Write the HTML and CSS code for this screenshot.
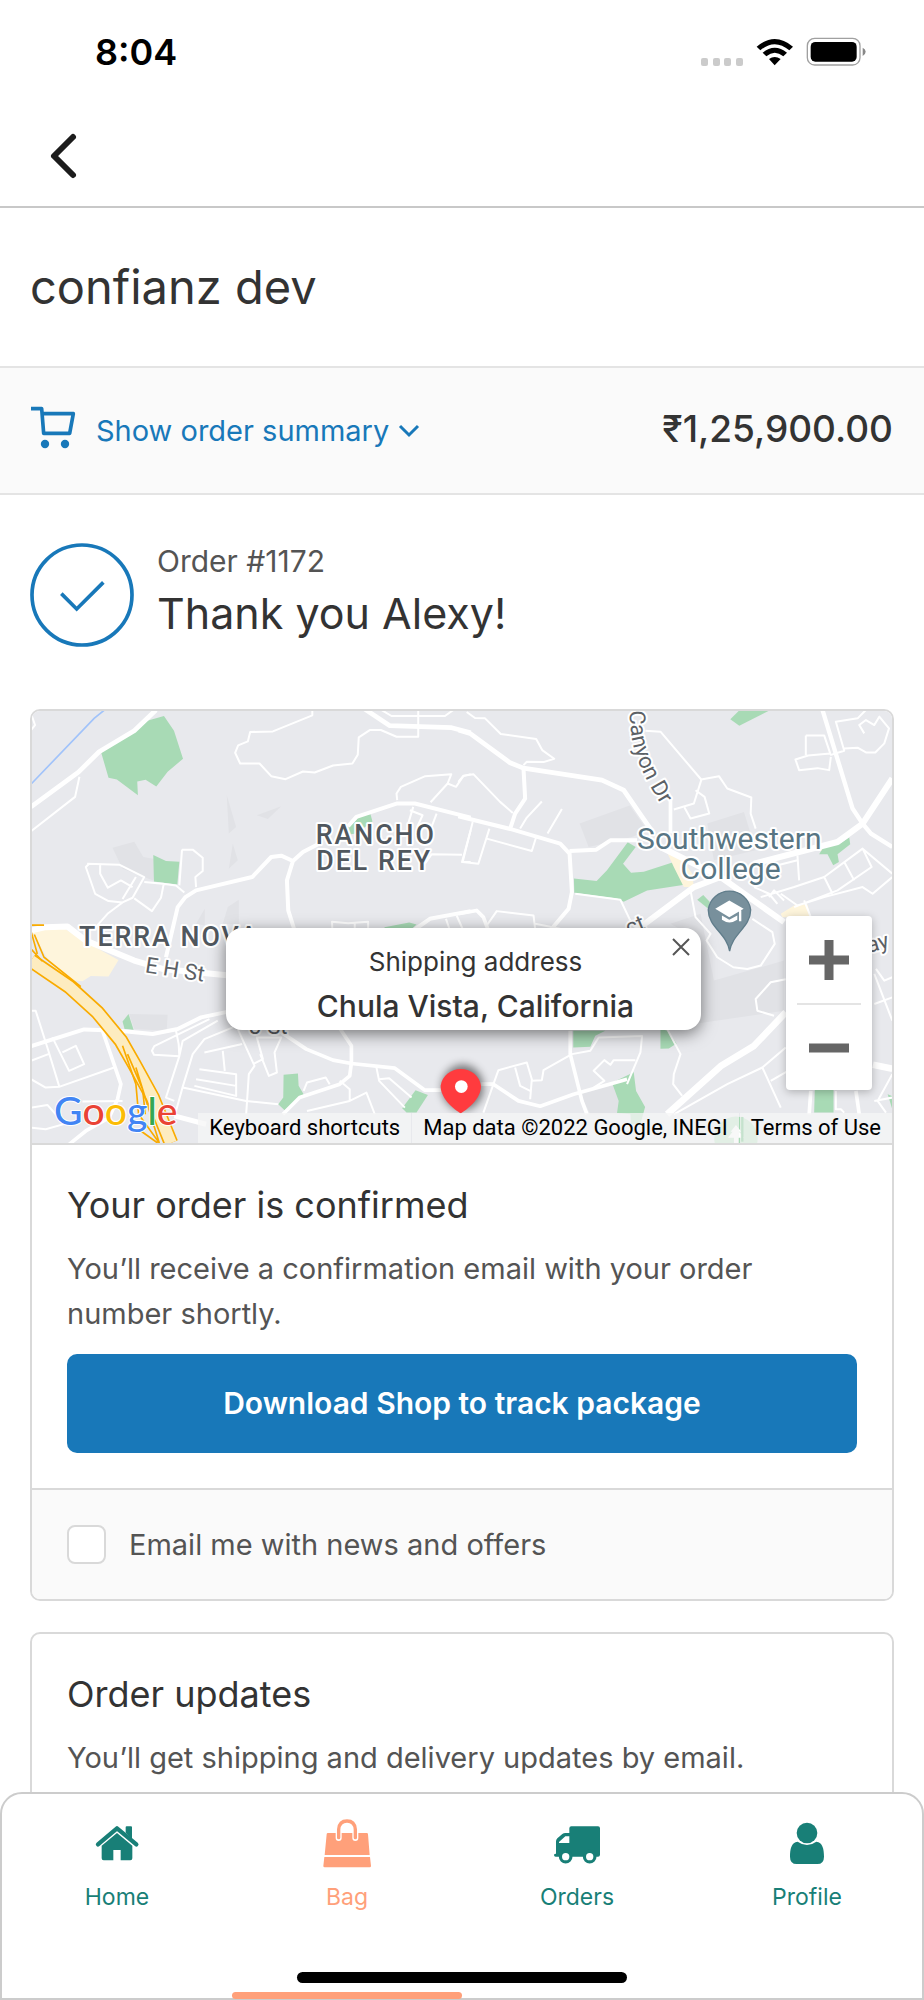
FILE: index.html
```html
<!DOCTYPE html>
<html lang="en">
<head>
<meta charset="utf-8">
<meta name="viewport" content="width=device-width, initial-scale=1">
<title>confianz dev – Order #1172</title>
<link rel="stylesheet" href="styles.css">
</head>
<body>
<div class="app">
  <header class="top">
    <div class="status">
      <time class="clock">8:04</time>
      <div class="status-icons">
        <svg width="44" height="28" viewBox="0 0 44 28" fill="#cbcbcb"><rect x="1" y="20" width="7" height="8" rx="2"/><rect x="13" y="20" width="7" height="8" rx="2"/><rect x="24" y="20" width="7" height="8" rx="2"/><rect x="36" y="20" width="7" height="8" rx="2"/></svg>
        <svg width="38" height="28" viewBox="225 54 114 84"><path d="M227 80Q281 34 336 80L325 91Q281 54 238 91ZM245 98Q281 68 318 98L307 109Q281 88 256 109ZM264 117Q281 105 299 117L281 136Z"/></svg>
        <svg width="60" height="30" viewBox="376 52 180 90"><rect x="380" y="56" width="158" height="80" rx="22" fill="none" stroke="#a0a0a0" stroke-width="4"/><rect x="390" y="67" width="138" height="59" rx="14"/><path d="M546 84q9 4 9 12t-9 13z" fill="#888"/></svg>
      </div>
    </div>
    <div class="nav">
      <button class="back" type="button" aria-label="Back"><svg width="32" height="48" viewBox="0 0 32 48"><path d="M25 5L6 24L25 43" fill="none" stroke="#1c1c1c" stroke-width="6" stroke-linecap="round" stroke-linejoin="round"/></svg></button>
    </div>
  </header>

  <main class="content">
    <h1 class="shop">confianz dev</h1>

    <section class="summary">
      <button class="summary-toggle" type="button">
        <svg class="cart" width="46" height="46" viewBox="30 48 138 138"><path d="M30 56H62L68 130H146L157 71H64" fill="none" stroke="#1878b9" stroke-width="11" stroke-linejoin="round"/><circle cx="72" cy="162" r="12.500" fill="#1878b9"/><circle cx="132" cy="162" r="12.500" fill="#1878b9"/></svg>
        <span>Show order summary</span>
        <svg class="caret" width="22" height="14" viewBox="0 0 22 14"><path d="M2 2L11 11L20 2" fill="none" stroke="#1878b9" stroke-width="3"/></svg>
      </button>
      <strong class="total">₹1,25,900.00</strong>
    </section>

    <section class="thanks">
      <svg width="104" height="104" viewBox="30 38 312 312" fill="none" stroke="#1878b9"><circle cx="186" cy="194" r="150" stroke-width="11"/><path d="M124 190L170 236L250 156" stroke-width="11"/></svg>
      <div>
        <p class="order-no">Order #1172</p>
        <h2 class="thanks-title">Thank you Alexy!</h2>
      </div>
    </section>

    <section class="card">
      <div class="map">
        <svg class="map-art" viewBox="0 0 858 431" preserveAspectRatio="xMidYMid slice">
          <defs>
            <path id="canyon" d="M508 32C508 150 540 215 612 330"/>
            <filter id="soft" x="-50%" y="-50%" width="200%" height="200%"><feGaussianBlur stdDeviation="12"/></filter>
          </defs>
          <rect width="858" height="431" fill="#e8e9ed"/>
          <g transform="translate(-13 -11) scale(.33333)">
            <g fill="#e1e2e6"><path d="M280 442L345 424L372 470L428 480L402 540L310 505Z"/><path d="M622 285L650 380L628 400ZM712 345L785 318L745 356ZM640 430L655 480L628 505ZM530 670L556 625L556 675ZM610 670L625 620L658 598V672ZM330 940L445 942L442 990L345 985Z"/></g>
            <g fill="#a8dab5">
              <path d="M246 157L384 62L434 48L464 92L491 176L445 215L411 259L379 239L354 244L356 285L293 238L268 233Z"/>
              <path d="M402 464L440 482L480 484L474 552L404 543Z"/>
              <path d="M986 382L1020 348L1052 341L1058 364L1010 400L992 402Z"/>
              <path d="M1094 680L1168 666L1190 672L1170 690H1094Z"/>
              <path d="M310 962L328 940L343 987L316 985Z"/>
              <path d="M792 1122L835 1118L837 1155L852 1180L795 1228L776 1210L791 1190Z"/>
              <path d="M1187 1168L1224 1182L1190 1235H1160L1147 1222Z"/>
            </g>
            <path d="M36 690L130 680L190 718L250 752L298 778L268 828L215 826L190 842L150 838L95 790Z" fill="#fef5dc"/>
            <path d="M36 252L225 55L256 30" fill="none" stroke="#a1c3fa" stroke-width="5"/>
            <g fill="none" stroke="#fff" stroke-linejoin="round">
              <g stroke-width="6">
                <path d="M36 393L168 290L181 230M36 40L48 75L36 90"/>
                <path d="M878 30V46L760 94L692 96L685 124L656 136L647 158L662 190H720L755 228L798 237L850 214L885 217L940 196L998 190L1014 164L1017 112L1050 90H1083L1130 110H1195V30M1085 30L1115 48H1275L1300 30"/>
                <path d="M1132 300L1130 280L1143 260L1216 228L1294 222L1283 250L1232 306M1283 250L1308 260L1330 228L1352 222M1180 320L1165 370M1170 330L1208 345L1192 380M1250 340L1235 380M1352 390L1326 485H1352M1326 463L1235 462L1215 490"/>
                <path d="M488 448H520L550 472V512L528 530L530 560M488 448L480 555M204 490L300 493L375 530L340 592L310 606L268 602L228 580L200 500L210 490M243 495V520L266 562L305 540L340 560M350 530L310 596M375 545L430 550L470 555L495 576M345 594L398 632L425 592L433 552M310 606L265 640L230 680"/>
                <path d="M36 930H50L88 1050L120 1155M36 1080L88 1060M36 1135L80 1160L120 1158L285 1100M100 1010L150 1110L195 1090L170 1035L130 1055M36 1220L85 1212L110 1240M190 1202L310 1200M36 1280L80 1285L150 1265"/>
                <path d="M570 955L405 1036L398 1050L404 1062L480 1066L478 1030L470 990M595 960L490 1020L480 1066L440 1190L465 1200M640 980L555 1015L520 1060L490 1158L470 1230M655 985L705 1095L688 1120L680 1240M555 1055L668 1030M540 1105L650 1120V1185L525 1155M530 1135L650 1155M610 1050L616 1110M490 1160L680 1200L776 1210M700 1090L730 1075L712 1010H785L765 1055L772 1115L748 1125L722 1060"/>
                <path d="M938 690L937 664L985 668L1045 664V690M1005 665V690M1278 655L1290 690M1310 645L1330 690M852 1170L862 1145L918 1130L930 1150M960 1140L990 1165V1200L1040 1175L1065 1240M862 1230L990 1200M1070 1100L1078 1140L1155 1220M1078 1135L1108 1132L1175 1190"/>
              </g>
              <g stroke-width="14">
                <path d="M36 320L178 216L240 155L345 92L410 30"/>
                <path d="M1030 24L1110 77L1295 83L1352 98"/>
                <path d="M985 378L1010 350L1130 310H1185L1352 352M440 770L475 620L498 590L530 570L698 530L755 470L785 466L820 482L850 455L895 432M820 482L802 540L806 630L825 690M1180 690L1230 655L1352 632" stroke-width="12"/>
                <path d="M36 690L80 680L145 678L200 720L345 780L430 805L630 825" stroke-width="18"/>
                <path d="M36 1036L195 986L300 990L400 1000L475 985L545 950L630 932" stroke-width="12"/>
                <path d="M770 985L860 1045L940 1078L995 1088L1125 1102L1215 1168L1265 1168M945 960L995 1035V1085L990 1125L960 1150L840 1190L790 1240M250 990L305 1150L295 1195L270 1250L200 1290L150 1330" stroke-width="11"/>
                <path d="M465 1245L560 1270" stroke-width="15"/>
              </g>
            </g>
            <path d="M36 780L150 858L235 935L305 1020L345 1090L400 1190L455 1326" fill="none" stroke="#f9ab00" stroke-width="44"/>
            <path d="M36 780L150 858L235 935L305 1020L345 1090L400 1190L455 1326" fill="none" stroke="#fdecc0" stroke-width="34"/>
            <path d="M36 674H75M36 692L55 760M46 702L75 770L185 858M36 745L70 782M310 1035L350 1150L358 1240L420 1326M325 1060L370 1165L378 1240M350 1100L420 1326M365 1290L415 1326" fill="none" stroke="#f9ab00" stroke-width="5"/>
            <g class="map-area"><text x="888" y="430">RANCHO</text><text x="890" y="508">DEL REY</text><text x="180" y="737">TERRA NOVA</text></g>
            <g class="map-road"><text transform="translate(376 815) rotate(9)">E H St</text><text x="690" y="1000">J St</text></g>
          </g>
          <g transform="translate(427 -11) scale(.33333)">
            <g fill="#e1e2e6"><path d="M358 370L508 316L560 390L515 410L385 440ZM630 670L720 640L760 840L970 780V930L700 970L720 720ZM845 845L970 800V920L880 910ZM740 370L850 335L885 450L760 480ZM360 1180L470 1150L480 1240H390Z"/></g>
            <g fill="#a8dab5">
              <path d="M809 58L835 32H925L836 77Z"/>
              <path d="M341 534L409 542L440 510L502 426L526 440L488 490L512 517L550 514L638 486L672 553L560 570L490 604L470 594L342 577Z"/>
              <path d="M710 598L728 584L748 605L742 624Z"/>
              <path d="M1075 462L1088 440L1140 428L1165 412L1168 432L1130 462L1134 485L1117 495L1100 462Z"/>
              <path d="M339 990H435L405 1005L390 1038L339 1040ZM600 985L622 990L648 1028L625 1043L600 1044Z"/>
              <path d="M455 1146L520 1114L527 1170L554 1218L540 1270H512L510 1240L470 1236L475 1200Z"/>
              <path d="M1062 1160H1118V1235H1060ZM1280 1180L1294 1186V1225Z"/>
            </g>
            <path d="M618 452L660 470L695 520L700 560H670L640 500ZM960 640L1005 612H1040L1050 650H965Z" fill="#fef5dc"/>
            <g fill="none" stroke="#fff" stroke-linejoin="round">
              <g stroke-width="6">
                <path d="M20 36L45 54L75 55L122 102L228 117L246 150L282 176L250 186L200 185L190 195M-5 245L10 227L40 222L120 305L158 338M245 304L200 352L180 385M305 326L262 400M38 365L8 485L55 490L88 385M80 415L215 452L228 410"/>
                <path d="M555 92L600 95L722 238L775 228L800 265L872 292L870 340L885 385M722 240L700 310L640 328M705 270L732 290L746 340L690 355L672 322"/>
                <path d="M1035 106H1090L1108 160L1042 166L1004 178L1015 210L1070 204L1105 210L1110 170M1035 106V165M1108 165L1150 152L1125 65L1190 55L1215 30M1150 145L1190 143L1215 157H1243L1270 130L1284 85L1255 50L1240 75L1215 60L1195 75L1210 100"/>
                <path d="M900 590L1000 560L1090 530L1205 445L1232 500L1130 570L1000 620M880 560L925 580L950 610M1205 445L1294 520M1010 465L1015 540M930 500L1010 480M1090 530L1115 580M1150 485L1180 540M1030 600L1050 650M960 580L1010 615L1090 590L1205 560L1235 580L1294 530M925 590L940 570L970 600"/>
                <path d="M690 570L705 650L750 700L738 720L770 770L818 800L860 805L900 795L942 730L935 695L875 655M975 836L930 845L885 895L890 930L940 945M1240 820L1294 960M1240 910L1294 890M1245 805L1270 840L1294 830M905 1100L960 1220M930 1140L1000 1100M640 1240L800 1150L905 1100L975 1040M1150 1235L1140 1225H1125V1170M1294 1120L1250 1200L1275 1235M1240 1200L1294 1190"/>
                <path d="M70 1235L100 1150L115 1108L200 1085L215 1135L210 1195M165 1100L180 1155L210 1170M215 1140L245 1138L250 1108L335 1060L390 1050L415 1010L545 1006L540 1055L500 1150M400 1160L432 1140L400 1110L432 1078L450 1092L460 1078H525M620 985L660 1060L640 1120L638 1150L665 1185"/>
                <path d="M345 580L480 598L512 665M80 675L110 632L220 645L225 685M225 670L300 685"/>
              </g>
              <g stroke-width="14">
                <path d="M-5 90L30 100L150 188L190 204L425 240L490 270L545 350L580 400"/>
                <path d="M-5 348L150 386L300 430L328 460L335 575L325 625L270 690M190 204L195 295L165 340L150 386M328 452L408 448L450 420L530 420" stroke-width="12"/>
                <path d="M600 440L780 530L970 665M540 680L700 560L780 530M880 490L1130 425L1205 370L1294 235" stroke-width="18"/>
                <path d="M1085 30L1175 325L1205 370L1230 400L1294 440" stroke-width="13"/>
                <path d="M620 1240L780 1096L880 1035L975 935" stroke-width="20"/>
                <path d="M330 990V1060L365 1200L380 1240M62 1150H100L175 1200L240 1216L340 1180L500 1135M-5 640L50 630L70 650L85 690M630 295L630 400M1050 1170L1045 1240M1185 1170L1195 1240" stroke-width="11"/>
                <path d="M1236 1092L1294 1104" stroke-width="20"/>
              </g>
            </g>
            <circle cx="826" cy="1312" r="65" fill="#a8dab5"/>
            <path d="M826 1272L842 1292H836L850 1310H832V1326H820V1310H802L816 1292H810Z" fill="#fff"/>
            <path d="M845 1248V1322" stroke="#34a853" stroke-width="7"/>
            <g class="map-road"><text><textPath href="#canyon">Canyon Dr</textPath></text><text transform="translate(506 705) rotate(-22)">ct</text><text transform="translate(1224 757) rotate(-16)">ay</text></g>
            <g class="map-place"><text x="806" y="445">Southwestern</text><text x="810" y="536">College</text></g>
            <path d="M807 752C800 700 743 680 743 628A64 64 0 0 1 870 628C870 680 814 700 807 752Z" fill="#78909c" stroke="#607d8b" stroke-width="4"/>
            <path d="M764 625L806 600L849 625L806 650ZM784 645L806 658L830 645V658Q806 674 784 658ZM835 630H842V662H835Z" fill="#fff"/>
            <ellipse cx="8" cy="1160" rx="62" ry="68" opacity=".5" filter="url(#soft)"/>
            <path d="M2 1238C-18 1225-58 1195-58 1155A61 58 0 0 1 63 1155C63 1195 22 1225 2 1238Z" fill="#ff3b3e"/><circle cx="4" cy="1157" r="19" fill="#fff"/>
          </g>
          <text class="google" x="22" y="413"><tspan fill="#4285f4">G</tspan><tspan fill="#ea4335">o</tspan><tspan fill="#fbbc05">o</tspan><tspan fill="#4285f4">g</tspan><tspan fill="#34a853">l</tspan><tspan fill="#ea4335">e</tspan></text>
        </svg>
        <div class="bubble">
          <span class="bubble-label">Shipping address</span>
          <strong class="bubble-place">Chula Vista, California</strong>
          <button class="close" type="button" aria-label="Close"><svg width="18" height="18" viewBox="0 0 18 18"><path d="M1 1L17 17M17 1L1 17" stroke="#555" stroke-width="2"/></svg></button>
        </div>
        <div class="zoom">
          <button type="button" aria-label="Zoom in"><svg width="40" height="40" viewBox="0 0 40 40"><path d="M20 0V40M0 20H40" stroke="#666" stroke-width="9"/></svg></button>
          <button type="button" aria-label="Zoom out"><svg width="40" height="40" viewBox="0 0 40 40"><path d="M0 20H40" stroke="#666" stroke-width="9"/></svg></button>
        </div>
        <div class="credits">
          <button type="button">Keyboard shortcuts</button>
          <span>Map data ©2022 Google, INEGI</span>
          <a href="#terms">Terms of Use</a>
        </div>
      </div>
      <div class="card-body">
        <h2 class="card-title">Your order is confirmed</h2>
        <p class="card-text">You’ll receive a confirmation email with your order number shortly.</p>
        <button class="download" type="button">Download Shop to track package</button>
      </div>
      <div class="card-foot">
        <input id="news" type="checkbox">
        <label for="news">Email me with news and offers</label>
      </div>
    </section>

    <section class="card">
      <div class="card-body">
        <h2 class="card-title">Order updates</h2>
        <p class="card-text">You’ll get shipping and delivery updates by email.</p>
      </div>
    </section>
  </main>

  <nav class="tabs">
    <a class="tab" href="#home">
      <svg width="52" height="52" viewBox="269 110 156 156"><path d="M290 195L347 147L405 195" fill="none" stroke="currentColor" stroke-width="13" stroke-linecap="round" stroke-linejoin="round"/><path d="M373 160V144Q373 141 376 141H389Q392 141 392 144V180ZM347 161L393 199V237Q393 243 387 243H358V212H336V243H307Q301 243 301 237V199Z" fill="currentColor"/></svg>
      <span>Home</span>
    </a>
    <a class="tab tab-active" href="#bag" aria-current="page">
      <svg width="52" height="52" viewBox="960 110 156 156"><path d="M981 161H1097Q1101 161 1101 165L1106 227H971L977 165Q977 161 981 161ZM970 233H1107L1110 260Q1110 264 1106 264H971Q967 264 967 260Z" fill="currentColor"/><path d="M1013 176V148Q1015 125 1038 125T1063 148V176" fill="none" stroke="#fff" stroke-width="18" stroke-linecap="round"/><path d="M1013 175V150Q1015 125 1038 125T1063 150V175" fill="none" stroke="currentColor" stroke-width="10" stroke-linecap="round"/></svg>
      <span>Bag</span>
    </a>
    <a class="tab" href="#orders">
      <svg width="52" height="52" viewBox="270 110 156 156" fill="currentColor"><path fill-rule="evenodd" d="M331 141H411Q417 141 417 147V226Q417 232 411 232H284Q279 232 279 227Q279 223 285 223V186Q285 181 289 177L304 164Q308 161 313 161H325V147Q325 141 331 141ZM325 171H313L294 188V191H325Z"/><circle cx="314" cy="232" r="16" stroke="currentColor" stroke-width="9"/><circle cx="314" cy="232" r="11" fill="#fff"/><circle cx="386" cy="232" r="16" stroke="currentColor" stroke-width="9"/><circle cx="386" cy="232" r="11" fill="#fff"/></svg>
      <span>Orders</span>
    </a>
    <a class="tab" href="#profile">
      <svg width="52" height="52" viewBox="957 110 156 156" fill="currentColor"><circle cx="1035" cy="161" r="31"/><path d="M1007 187Q1035 207 1063 187C1082 188 1086 210 1086 232Q1086 254 1066 254H1004Q984 254 984 232C984 210 988 188 1007 187Z"/></svg>
      <span>Profile</span>
    </a>
    <div class="home-bar"></div>
  </nav>
</div>
</body>
</html>
```

FILE: styles.css
```css
* { box-sizing: border-box; }

body {
  margin: 0;
  background: #fff;
  color: #333;
  font-family: Inter, "Noto Sans", sans-serif;
  font-size: 29px;
  line-height: 45px;
}

h1, h2, p { margin: 0; font-weight: 400; }

button {
  margin: 0;
  padding: 0;
  border: 0;
  background: none;
  color: inherit;
  font: inherit;
}

svg { display: block; flex: none; }

.app {
  display: flex;
  flex-direction: column;
  height: 100vh;
}

.top { border-bottom: 2px solid #c8c8c8; }

.status {
  display: flex;
  align-items: center;
  justify-content: space-between;
  height: 104px;
  padding: 0 58px 0 95px;
  color: #000;
}

.clock { font-size: 36px; font-weight: 600; }

.status-icons { display: flex; align-items: center; gap: 12px; }

.nav {
  display: flex;
  align-items: center;
  height: 102px;
  padding: 2px 48px 0;
}

.content {
  flex: 1;
  min-height: 0;
  overflow-y: auto;
  scrollbar-width: none;
}

.shop {
  padding: 48px 30px;
  font-size: 47px;
  line-height: 62px;
}

.summary {
  display: flex;
  align-items: center;
  justify-content: space-between;
  height: 129px;
  padding: 0 31px;
  border: solid #e4e4e4;
  border-width: 2px 0;
  background: #fafafa;
}

.summary-toggle {
  display: flex;
  align-items: center;
  gap: 19px;
  color: #1878b9;
}

.cart { margin-bottom: 4px; }

.caret { margin-left: -10px; }

.total { padding-bottom: 4px; font-size: 37px; font-weight: 500; }

.thanks {
  display: flex;
  align-items: center;
  gap: 23px;
  padding: 48px 30px 62px;
}

.order-no { color: #545454; font-size: 30px; line-height: 36px; }

.thanks-title { font-size: 43px; line-height: 68px; }

.card {
  margin: 0 30px 31px;
  border: 2px solid #d9d9d9;
  border-radius: 10px;
  overflow: hidden;
}

.map {
  position: relative;
  border-bottom: 2px solid #d9d9d9;
}

.map-art { width: 100%; height: auto; }

.map text {
  font-family: Roboto, sans-serif;
  paint-order: stroke;
  stroke: #fff;
  stroke-width: 12px;
  stroke-linejoin: round;
}

.map-area { fill: #50575e; font-size: 80px; font-weight: 500; letter-spacing: 6px; }
.map-road { fill: #5c6166; font-size: 66px; }
.map-place { fill: #587583; font-size: 90px; text-anchor: middle; }

.map .google {
  font-family: Lato, sans-serif;
  font-size: 39px;
  font-weight: 500;
  stroke-width: 2px;
}

.bubble {
  position: absolute;
  top: 217px;
  left: 50%;
  display: flex;
  flex-direction: column;
  align-items: center;
  width: 475px;
  height: 102px;
  margin-left: -236px;
  padding: 12px 0 0 24px;
  border-radius: 16px;
  background: #fff;
  box-shadow: 0 4px 16px rgba(0, 0, 0, .5);
}

.bubble-label { font-size: 26px; line-height: 44px; }
.bubble-place { font-size: 30px; font-weight: 500; line-height: 44px; }

.close { position: absolute; top: 10px; right: 11px; }

.zoom {
  position: absolute;
  right: 20px;
  bottom: 53px;
  width: 86px;
  border-radius: 4px;
  background: #fff;
  box-shadow: 0 2px 8px rgba(0, 0, 0, .25);
}

.zoom button {
  display: grid;
  place-items: center;
  width: 64px;
  height: 87px;
  margin: 0 auto;
}

.zoom button + button { border-top: 2px solid #e4e4e4; }

.credits {
  position: absolute;
  right: 0;
  bottom: 0;
  display: flex;
  gap: 1px;
  color: #000;
  font-family: Roboto, sans-serif;
  font-size: 22px;
  line-height: 30px;
}

.credits > * {
  padding: 0 11px;
  background: rgba(245, 245, 245, .75);
  color: inherit;
  text-decoration: none;
}

.card-body { padding: 33px 35px 35px; }

.card-title { margin-bottom: 14px; font-size: 36px; line-height: 54px; }

.card-text { color: #545454; }

.download {
  width: 100%;
  height: 99px;
  margin-top: 18px;
  border-radius: 10px;
  background: #1878b9;
  color: #fff;
  font-size: 30px;
  font-weight: 600;
}

.card-foot {
  display: flex;
  align-items: center;
  gap: 23px;
  height: 111px;
  padding: 0 35px;
  border-top: 2px solid #d9d9d9;
  background: #fafafa;
  color: #545454;
}

.card-foot input {
  appearance: none;
  width: 39px;
  height: 39px;
  margin: 0;
  border: 2px solid #d9d9d9;
  border-radius: 8px;
  background: #fff;
}

.tabs {
  position: relative;
  display: flex;
  flex: none;
  height: 208px;
  border: 2px solid #ccc;
  border-radius: 22px 22px 0 0;
  background: #fff;
}

.tab {
  position: relative;
  display: flex;
  flex: 1;
  flex-direction: column;
  align-items: center;
  gap: 13px;
  padding-top: 22px;
  color: #187f77;
  font-size: 23px;
  line-height: 32px;
  text-decoration: none;
}

.tab-active { color: #ffa07a; }

.tab-active::after {
  content: "";
  position: absolute;
  right: 0;
  bottom: -1px;
  left: 0;
  height: 7px;
  border-radius: 4px;
  background: #ffa07a;
}

.home-bar {
  position: absolute;
  bottom: 15px;
  left: 50%;
  width: 330px;
  height: 11px;
  margin-left: -165px;
  border-radius: 6px;
  background: #000;
}
```
